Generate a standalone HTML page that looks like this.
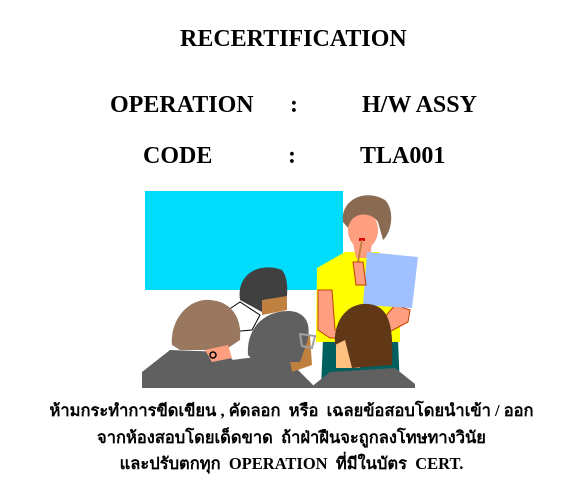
<!DOCTYPE html>
<html><head><meta charset="utf-8"><style>
body{margin:0;width:583px;height:489px;background:#fff;position:relative;overflow:hidden;font-family:"Liberation Serif",serif;font-weight:bold;color:#000}
.t{position:absolute;font-size:24px;white-space:nowrap;line-height:1}
.th{position:absolute;left:0;width:583px;text-align:center;font-family:"Liberation Serif","DejaVu Sans",sans-serif;font-size:16.5px;line-height:1;white-space:pre}
</style></head><body>
<div class="t" style="left:180px;top:27px">RECERTIFICATION</div>
<div class="t" style="left:110px;top:93px">OPERATION</div>
<div class="t" style="left:290px;top:93px">:</div>
<div class="t" style="left:362px;top:93px">H/W ASSY</div>
<div class="t" style="left:143px;top:144px">CODE</div>
<div class="t" style="left:288px;top:144px">:</div>
<div class="t" style="left:360px;top:144px">TLA001</div>
<svg style="position:absolute;left:0;top:0" width="583" height="489">
<rect x="145" y="191" width="198" height="99" fill="#00dcfc"/>
<polygon points="323,340 398,340 400,388 321,388" fill="#006060"/>
<polygon points="317,268 345,252 378,252 400,268 400,342 316,342" fill="#ffff00"/>
<polygon points="318,290 332,290 335,330 378,325 395,305 410,310 408,322 378,338 330,338 318,330" fill="#ff9f80" stroke="#c04000" stroke-width="1"/>
<ellipse cx="363" cy="230" rx="15" ry="19" fill="#ff9f80"/>
<polygon points="353,243 372,243 370,258 356,258" fill="#ff9f80"/>
<path d="M343,222 C340,200 365,188 385,200 C395,210 392,232 383,240 L378,222 C372,212 352,210 348,228 Z" fill="#8a6a50"/>
<polygon points="367,252 418,257 412,308 363,305" fill="#a0c0ff"/>
<rect x="359" y="238" width="6" height="3" fill="#e00000"/>
<line x1="362" y1="240" x2="358" y2="262" stroke="#c08040" stroke-width="2"/>
<polygon points="353,262 363,262 366,285 356,285" fill="#ff9f80" stroke="#c04000" stroke-width="1"/>
<polygon points="228,310 240,302 260,315 252,330 230,332" fill="#fff" stroke="#000" stroke-width="1"/>
<path d="M240,300 C236,272 262,262 282,270 C290,280 287,300 285,308 L262,312 Z" fill="#404040"/>
<polygon points="262,300 287,296 287,310 262,315" fill="#c08040"/>
<polygon points="142,388 142,372 170,350 225,352 245,372 248,388" fill="#606060"/>
<path d="M172,345 C170,318 190,298 210,300 C235,302 242,322 240,340 L225,350 L180,350 Z" fill="#9a7860"/>
<polygon points="205,350 228,345 232,358 212,362" fill="#ff9f80"/>
<circle cx="213" cy="355" r="3" fill="none" stroke="#000" stroke-width="1.5"/>
<polygon points="310,388 330,372 395,368 415,384 415,388" fill="#606060"/>
<polygon points="336,340 360,340 360,368 336,368" fill="#ffc080"/>
<path d="M335,345 C333,318 350,302 368,304 C388,306 394,322 392,365 L352,368 L345,340 Z" fill="#603818"/>
<polygon points="212,388 232,360 255,357 290,362 316,388" fill="#606060"/>
<polygon points="287,340 310,336 312,365 292,372" fill="#c08040"/>
<path d="M248,355 C246,325 268,310 290,311 C310,313 312,330 305,348 L300,362 L255,362 Z" fill="#606060"/>
<polygon points="300,334 315,336 312,348 302,346" fill="none" stroke="#a0a0a0" stroke-width="2"/>
</svg>
<div class="th" style="top:403px">ห้ามกระทำการขีดเขียน , คัดลอก  หรือ  เฉลยข้อสอบโดยนำเข้า / ออก</div>
<div class="th" style="top:430px">จากห้องสอบโดยเด็ดขาด  ถ้าฝ่าฝืนจะถูกลงโทษทางวินัย</div>
<div class="th" style="top:456px">และปรับตกทุก  OPERATION  ที่มีในบัตร  CERT.</div>
</body></html>
